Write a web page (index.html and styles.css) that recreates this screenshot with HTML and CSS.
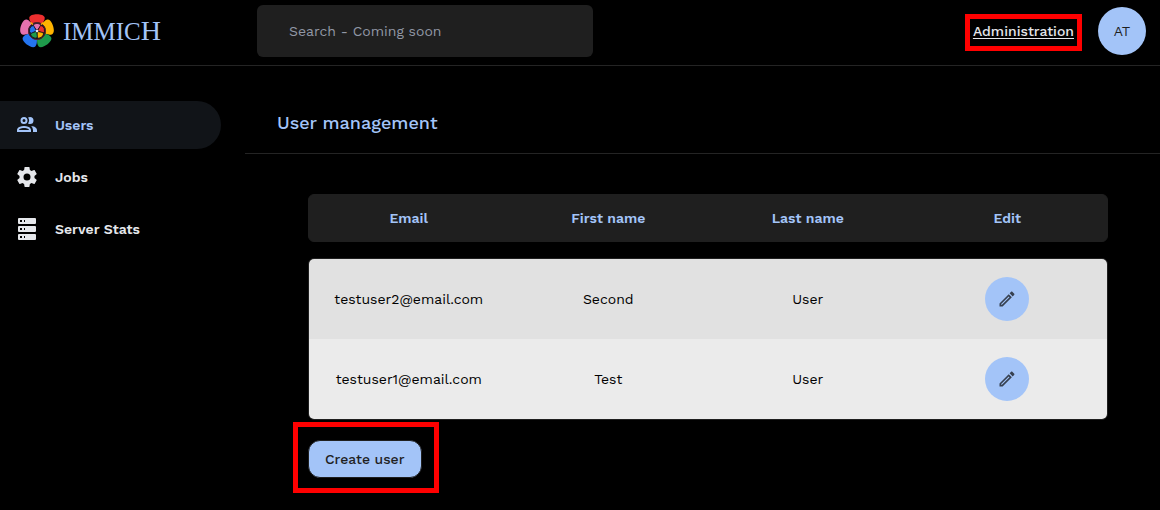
FILE: index.html
```html
<!DOCTYPE html>
<html lang="en">
<head>
<meta charset="utf-8">
<meta name="viewport" content="width=device-width, initial-scale=1">
<title>User management - Immich</title>
<link rel="stylesheet" href="styles.css">
</head>
<body>
<header class="topbar">
  <a class="brand" href="#">
    <svg class="brand-mark" viewBox="0 0 36 36" aria-hidden="true">
      <defs>
        <path id="petal" d="M10.300 4.500C11 0 25 0 25.700 4.500C26 7 24.600 8.800 23 11Q18 7.500 13 11C11.400 8.800 10 7 10.300 4.500Z"/>
        <path id="leaf" d="M18 17.500L13.800 13Q14.500 10.500 18 10.300Q21.500 10.500 22.200 13Z"/>
      </defs>
      <use href="#petal" fill="#ed2f2f"/>
      <use href="#petal" fill="#ffb400" transform="rotate(72 18 18)"/>
      <use href="#petal" fill="#1e9b4b" transform="rotate(144 18 18)"/>
      <use href="#petal" fill="#2474ef" transform="rotate(216 18 18)"/>
      <use href="#petal" fill="#e472ae" transform="rotate(288 18 18)"/>
      <circle cx="18" cy="18" r="8.500" fill="#17121a" stroke="#5a2530" stroke-width="1"/>
      <path d="M11.500 9.500L14 11.500M24.500 9.500L22 11.500" stroke="#ffb400" stroke-width="1.500"/>
      <g stroke="#17121a" stroke-width=".8">
        <use href="#leaf" fill="#e472ae"/>
        <use href="#leaf" fill="#ed2f2f" transform="rotate(72 18 18)"/>
        <use href="#leaf" fill="#ffb400" transform="rotate(144 18 18)"/>
        <use href="#leaf" fill="#1e9b4b" transform="rotate(216 18 18)"/>
        <use href="#leaf" fill="#2474ef" transform="rotate(288 18 18)"/>
      </g>
      <circle cx="18" cy="18" r="1.300" fill="#dfe8f5"/>
    </svg>
    <span class="brand-name">IMMIC<span class="brand-tall">H</span></span>
  </a>
  <input class="search" type="search" placeholder="Search - Coming soon" aria-label="Search">
  <nav class="account">
    <div class="highlight highlight-link"><a class="admin-link" href="#">Administration</a></div>
    <button class="avatar" type="button" aria-label="Account AT">AT</button>
  </nav>
</header>
<div class="layout">
  <nav class="sidebar">
    <a class="side-item side-item-active" href="#" aria-current="page">
      <svg class="icon" viewBox="0 0 24 24" aria-hidden="true"><path d="M13.070 10.410A5 5 0 0 0 13.070 4.590A3.390 3.390 0 0 1 15 4A3.500 3.500 0 0 1 15 11A3.390 3.390 0 0 1 13.070 10.410M5.500 7.500A3.500 3.500 0 1 1 9 11A3.500 3.500 0 0 1 5.500 7.500M7.500 7.500A1.500 1.500 0 1 0 9 6A1.500 1.500 0 0 0 7.500 7.500M16 17V19H2V17S2 13 9 13 16 17 16 17M14 17C13.860 16.220 12.670 15 9 15S4.070 16.310 4 17M15.950 13A5.320 5.320 0 0 1 18 17V19H22V17S22 13.370 15.940 13Z"/></svg>
      <span>Users</span>
    </a>
    <a class="side-item" href="#">
      <svg class="icon" viewBox="0 0 24 24" aria-hidden="true"><path d="M12,15.5A3.5,3.5 0 0,1 8.5,12A3.5,3.5 0 0,1 12,8.5A3.5,3.5 0 0,1 15.5,12A3.5,3.5 0 0,1 12,15.5M19.43,12.97C19.47,12.65 19.5,12.33 19.5,12C19.5,11.67 19.47,11.34 19.43,11L21.54,9.37C21.73,9.22 21.78,8.95 21.66,8.73L19.66,5.27C19.54,5.05 19.27,4.96 19.05,5.05L16.56,6.05C16.04,5.66 15.5,5.32 14.87,5.07L14.5,2.42C14.46,2.18 14.25,2 14,2H10C9.75,2 9.54,2.18 9.5,2.42L9.13,5.07C8.5,5.32 7.96,5.66 7.44,6.05L4.95,5.05C4.73,4.96 4.46,5.05 4.34,5.27L2.34,8.73C2.21,8.95 2.27,9.22 2.46,9.37L4.57,11C4.53,11.34 4.5,11.67 4.5,12C4.5,12.33 4.53,12.65 4.57,12.97L2.46,14.63C2.27,14.78 2.21,15.05 2.34,15.27L4.34,18.73C4.46,18.95 4.73,19.03 4.95,18.95L7.44,17.94C7.96,18.34 8.5,18.68 9.13,18.93L9.5,21.58C9.54,21.82 9.75,22 10,22H14C14.25,22 14.46,21.82 14.5,21.58L14.87,18.93C15.5,18.67 16.04,18.34 16.56,17.94L19.05,18.95C19.27,19.03 19.54,18.95 19.66,18.73L21.66,15.27C21.78,15.05 21.73,14.78 21.54,14.63L19.43,12.97Z"/></svg>
      <span>Jobs</span>
    </a>
    <a class="side-item" href="#">
      <svg class="icon" viewBox="0 0 24 24" aria-hidden="true"><path d="M4,1H20A1,1 0 0,1 21,2V6A1,1 0 0,1 20,7H4A1,1 0 0,1 3,6V2A1,1 0 0,1 4,1M4,9H20A1,1 0 0,1 21,10V14A1,1 0 0,1 20,15H4A1,1 0 0,1 3,14V10A1,1 0 0,1 4,9M4,17H20A1,1 0 0,1 21,18V22A1,1 0 0,1 20,23H4A1,1 0 0,1 3,22V18A1,1 0 0,1 4,17M9,5H10V3H9V5M9,13H10V11H9V13M9,21H10V19H9V21M5,3V5H7V3H5M5,11V13H7V11H5M5,19V21H7V19H5Z"/></svg>
      <span>Server Stats</span>
    </a>
  </nav>
  <main class="content">
    <h1 class="title">User management</h1>
    <section class="panel">
      <table class="users">
        <thead class="users-head">
          <tr class="row"><th scope="col">Email</th><th scope="col">First name</th><th scope="col">Last name</th><th scope="col">Edit</th></tr>
        </thead>
        <tbody class="users-body">
          <tr class="row">
            <td>testuser2@email.com</td><td>Second</td><td>User</td>
            <td><button class="edit" type="button" aria-label="Edit testuser2@email.com"><svg class="pencil" viewBox="0 0 24 24" aria-hidden="true"><path d="M14.060,9L15,9.940L5.920,19H5V18.080L14.060,9M17.660,3C17.410,3 17.150,3.100 16.960,3.290L15.130,5.120L18.880,8.870L20.710,7.040C21.100,6.650 21.100,6 20.710,5.630L18.370,3.290C18.170,3.090 17.920,3 17.660,3M14.060,6.190L3,17.250V21H6.750L17.810,9.940L14.060,6.190Z"/></svg></button></td>
          </tr>
          <tr class="row">
            <td>testuser1@email.com</td><td>Test</td><td>User</td>
            <td><button class="edit" type="button" aria-label="Edit testuser1@email.com"><svg class="pencil" viewBox="0 0 24 24" aria-hidden="true"><path d="M14.060,9L15,9.940L5.920,19H5V18.080L14.060,9M17.660,3C17.410,3 17.150,3.100 16.960,3.290L15.130,5.120L18.880,8.870L20.710,7.040C21.100,6.650 21.100,6 20.710,5.630L18.370,3.290C18.170,3.090 17.920,3 17.660,3M14.060,6.190L3,17.250V21H6.750L17.810,9.940L14.060,6.190Z"/></svg></button></td>
          </tr>
        </tbody>
      </table>
      <div class="highlight highlight-create"><button class="create" type="button">Create user</button></div>
    </section>
  </main>
</div>
</body>
</html>
```
FILE: styles.css
```css
* {
  box-sizing: border-box;
}

body {
  margin: 0;
  background: #000;
  color: #e5e7eb;
  font: 14px/20px "Work Sans", Inter, sans-serif;
}

a {
  color: inherit;
  text-decoration: none;
}

button {
  border: 0;
  padding: 0;
  font: inherit;
  cursor: pointer;
}

svg {
  display: block;
  fill: currentColor;
}

.topbar {
  display: grid;
  grid-template-columns: 238px minmax(160px, 336px) 1fr;
  align-items: center;
  padding: 5px 14px 8px 19px;
  border-bottom: 1px solid #242424;
}

.brand {
  display: flex;
  align-items: center;
  gap: 8px;
  color: #a3c4f8;
}

.brand-mark {
  width: 36px;
  height: 36px;
}

.brand-name {
  font: 25px/32px "Liberation Serif", serif;
}

.brand-tall {
  font-size: 28px;
}

.search {
  width: 100%;
  height: 52px;
  padding: 0 32px;
  border: 0;
  border-radius: 6px;
  background: #1f1f1f;
  color: #e5e7eb;
  font: inherit;
}

.search::placeholder {
  color: #9197a5;
  opacity: 1;
}

.account {
  display: flex;
  align-items: center;
  justify-content: flex-end;
  gap: 16px;
}

.highlight {
  border: 5px solid #f00;
}

.highlight-link {
  margin-top: 2px;
  padding: 2px 3px 5px;
}

.admin-link {
  display: block;
  font-weight: 500;
  text-decoration: underline;
  text-underline-offset: 2px;
}

.avatar {
  width: 48px;
  height: 48px;
  border-radius: 50%;
  background: #a3c4f8;
  color: #1f1f1f;
}

.layout {
  display: grid;
  grid-template-columns: 245px 1fr;
}

.sidebar {
  display: flex;
  flex-direction: column;
  gap: 4px;
  padding: 35px 24px 0 0;
}

.side-item {
  display: flex;
  align-items: center;
  gap: 16px;
  height: 48px;
  padding-left: 15px;
  border-radius: 0 24px 24px 0;
  font-weight: 600;
}

.side-item-active {
  background: #111418;
  color: #a3c4f8;
}

.icon {
  width: 24px;
  height: 24px;
}

.title {
  margin: 0;
  padding: 43px 32px 16px;
  border-bottom: 1px solid #242424;
  color: #a3c4f8;
  font-size: 18px;
  line-height: 28px;
  font-weight: 500;
}

.panel {
  padding: 40px 52px 16px 63px;
}

.users {
  display: block;
  text-align: center;
}

.users-head,
.users-body {
  display: block;
  overflow: hidden;
  border: 1px solid #1f1f1f;
  border-radius: 6px;
}

.users-head {
  margin-bottom: 16px;
  background: #1f1f1f;
  color: #a3c4f8;
}

.row {
  display: grid;
  grid-template-columns: repeat(4, 1fr);
  align-items: center;
}

.row th,
.row td {
  padding: 0;
}

.row th {
  font-weight: 600;
  line-height: 46px;
}

.users-body .row {
  height: 80px;
  background: #e1e1e1;
  color: #000;
}

.users-body .row:nth-child(even) {
  background: #ebebeb;
}

.edit {
  display: grid;
  place-items: center;
  width: 44px;
  height: 44px;
  margin: 0 auto;
  border-radius: 50%;
  background: #a3c4f8;
  color: #374151;
}

.pencil {
  width: 20px;
  height: 20px;
}

.highlight-create {
  width: fit-content;
  margin: 2px 0 0 -15px;
  padding: 13px 12px 10px 10px;
}

.create {
  display: block;
  padding: 8px 16px;
  border: 1px solid #1f1f1f;
  border-radius: 12px;
  background: #a3c4f8;
  color: #1f1f1f;
  font-weight: 500;
}
```
